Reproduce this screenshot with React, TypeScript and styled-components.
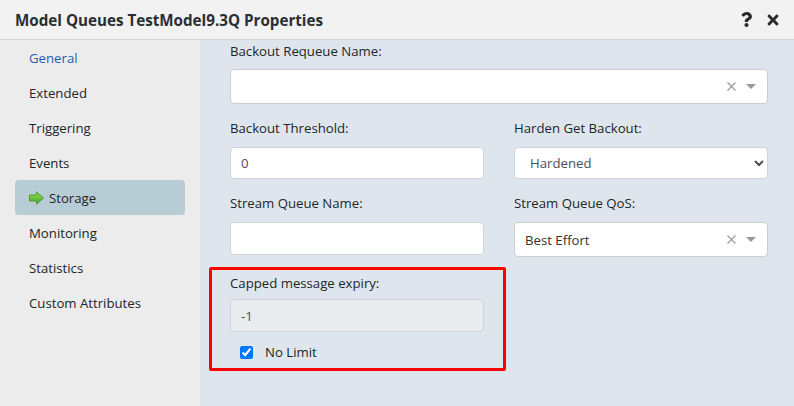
import { FaQuestion, FaTimes } from 'react-icons/fa';

import styled, { createGlobalStyle } from 'styled-components';

const GlobalStyle = createGlobalStyle`
  html, body {
    margin: 0;
    padding: 0;
    height: 100%;
    overflow: hidden;
    background: #dfe5ed;
  }
  body {
    font-family: 'Open Sans', 'Noto Sans', 'Liberation Sans', sans-serif;
    font-size: 13.2px;
    color: #212529;
  }
`;

const Dialog = styled.div`
  display: flex;
  flex-direction: column;
  width: 794px;
  height: 406px;
`;

const Header = styled.header`
  display: flex;
  align-items: center;
  justify-content: space-between;
  box-sizing: border-box;
  height: 40px;
  padding: 0 13px 0 15px;
  background: #f2f2f2;
  border-bottom: 1px solid #d5d7da;
`;

const Title = styled.h1`
  margin: 0;
  font-size: 15.2px;
  font-weight: 700;
  color: #2a2e33;
`;

const HeaderIcons = styled.div`
  display: flex;
  align-items: center;
  gap: 11px;
  color: #2a2a2a;
`;

const Body = styled.div`
  display: flex;
  flex: 1;
  min-height: 0;
`;

const Sidebar = styled.nav`
  box-sizing: border-box;
  width: 200px;
  padding: 0 15px;
  background: #ececec;
`;

const NavItem = styled.div<{ $active?: boolean; $selected?: boolean }>`
  display: flex;
  align-items: center;
  gap: 5px;
  height: 35px;
  padding-left: 14px;
  border-radius: 4px;
  color: ${(props) => (props.$active ? '#1c5fb0' : '#212529')};
  background: ${(props) => (props.$selected ? '#b8ccd6' : 'transparent')};
`;

const Main = styled.main`
  flex: 1;
  box-sizing: border-box;
  padding: 1px 26px 0 30px;
  background: #dfe5ed;
`;

const FormRow = styled.div<{ $gap?: number }>`
  display: grid;
  grid-template-columns: 254px 254px;
  column-gap: 30px;
  margin-bottom: ${(props) => props.$gap ?? 14}px;
`;

const FullRow = styled.div`
  margin-bottom: 14px;
`;

const Field = styled.div`
  position: relative;
  min-width: 0;
`;

const Label = styled.label<{ $gap?: number }>`
  display: block;
  height: 20px;
  margin-bottom: ${(props) => props.$gap ?? 9}px;
  line-height: 20px;
`;

const TextBox = styled.input<{ $height?: number }>`
  display: block;
  box-sizing: border-box;
  width: 100%;
  height: ${(props) => props.$height ?? 33}px;
  padding: 0 10px;
  font-family: inherit;
  font-size: 13.2px;
  color: #495057;
  background: #fff;
  border: 1px solid #ced4da;
  border-radius: 4px;
  outline: none;
  &:disabled {
    background: #e9ecef;
    color: #495057;
  }
`;

const NativeSelect = styled.select`
  display: block;
  box-sizing: border-box;
  width: 100%;
  height: 32px;
  padding: 0 10px 0 11px;
  font-family: inherit;
  font-size: 13.2px;
  color: #495057;
  background: #fff;
  border: 1px solid #ced4da;
  border-radius: 4px;
  outline: none;
`;

const Combo = styled.div`
  display: flex;
  align-items: center;
  box-sizing: border-box;
  height: 35px;
  padding: 0 11px 0 10px;
  color: #333;
  background: #fff;
  border: 1px solid #ccc;
  border-radius: 4px;
`;

const ComboValue = styled.span`
  flex: 1;
`;

const ComboClear = styled.span`
  display: flex;
  margin-right: 10px;
  color: #999;
`;

const Caret = styled.span`
  width: 0;
  height: 0;
  border-style: solid;
  border-width: 5px 5px 0;
  border-color: #999 transparent transparent;
`;

const CheckRow = styled.label`
  display: flex;
  align-items: center;
  gap: 12px;
  margin-top: 10px;
  padding-left: 10px;
  line-height: 20px;
`;

const Check = styled.input`
  width: 13px;
  height: 13px;
  margin: 0;
`;

// red annotation drawn over the capped expiry field
const Highlight = styled.div`
  position: absolute;
  left: -21px;
  top: -6px;
  width: 297px;
  height: 104px;
  box-sizing: border-box;
  border: 3px solid #ff0000;
  border-radius: 2px;
  pointer-events: none;
`;

function ArrowIcon() {
  return (
    <svg width="15" height="14" viewBox="0 0 15 14">
      <defs>
        <linearGradient id="arrowFill" x1="0" y1="0" x2="0" y2="1">
          <stop offset="0" stopColor="#9be04a" />
          <stop offset="1" stopColor="#3fa52a" />
        </linearGradient>
      </defs>
      <path
        d="M.5 4h7V.8L14.500 7l-7 6.200V10h-7z"
        fill="url(#arrowFill)"
        stroke="#4f9a35"
        strokeWidth="1"
      />
    </svg>
  );
}

function ClearIcon() {
  return (
    <svg width="9" height="9" viewBox="0 0 9 9">
      <path d="M.5.500l8 8M8.500.500l-8 8" stroke="currentColor" strokeWidth="1.100" />
    </svg>
  );
}

const navItems = [
  'General',
  'Extended',
  'Triggering',
  'Events',
  'Storage',
  'Monitoring',
  'Statistics',
  'Custom Attributes',
];

function App() {
  return (
    <Dialog>
      <GlobalStyle />
      <Header>
        <Title>Model Queues TestModel9.3Q Properties</Title>
        <HeaderIcons>
          <FaQuestion size={15} />
          <FaTimes size={16} />
        </HeaderIcons>
      </Header>
      <Body>
        <Sidebar>
          {navItems.map((item) => (
            <NavItem
              key={item}
              $active={item === 'General'}
              $selected={item === 'Storage'}
            >
              {item === 'Storage' && <ArrowIcon />}
              {item}
            </NavItem>
          ))}
        </Sidebar>
        <Main>
          <FullRow>
            <Label $gap={8}>Backout Requeue Name:</Label>
            <Combo>
              <ComboValue />
              <ComboClear>
                <ClearIcon />
              </ComboClear>
              <Caret />
            </Combo>
          </FullRow>
          <FormRow>
            <Field>
              <Label>Backout Threshold:</Label>
              <TextBox $height={32} defaultValue="0" />
            </Field>
            <Field>
              <Label>Harden Get Backout:</Label>
              <NativeSelect defaultValue="Hardened">
                <option>Hardened</option>
                <option>Not Hardened</option>
              </NativeSelect>
            </Field>
          </FormRow>
          <FormRow $gap={16}>
            <Field>
              <Label>Stream Queue Name:</Label>
              <TextBox />
            </Field>
            <Field>
              <Label>Stream Queue QoS:</Label>
              <Combo>
                <ComboValue>Best Effort</ComboValue>
                <ComboClear>
                  <ClearIcon />
                </ComboClear>
                <Caret />
              </Combo>
            </Field>
          </FormRow>
          <FormRow>
            <Field>
              <Highlight />
              <Label $gap={6}>Capped message expiry:</Label>
              <TextBox defaultValue="-1" disabled />
              <CheckRow>
                <Check type="checkbox" defaultChecked />
                No Limit
              </CheckRow>
            </Field>
          </FormRow>
        </Main>
      </Body>
    </Dialog>
  );
}

export default App;
